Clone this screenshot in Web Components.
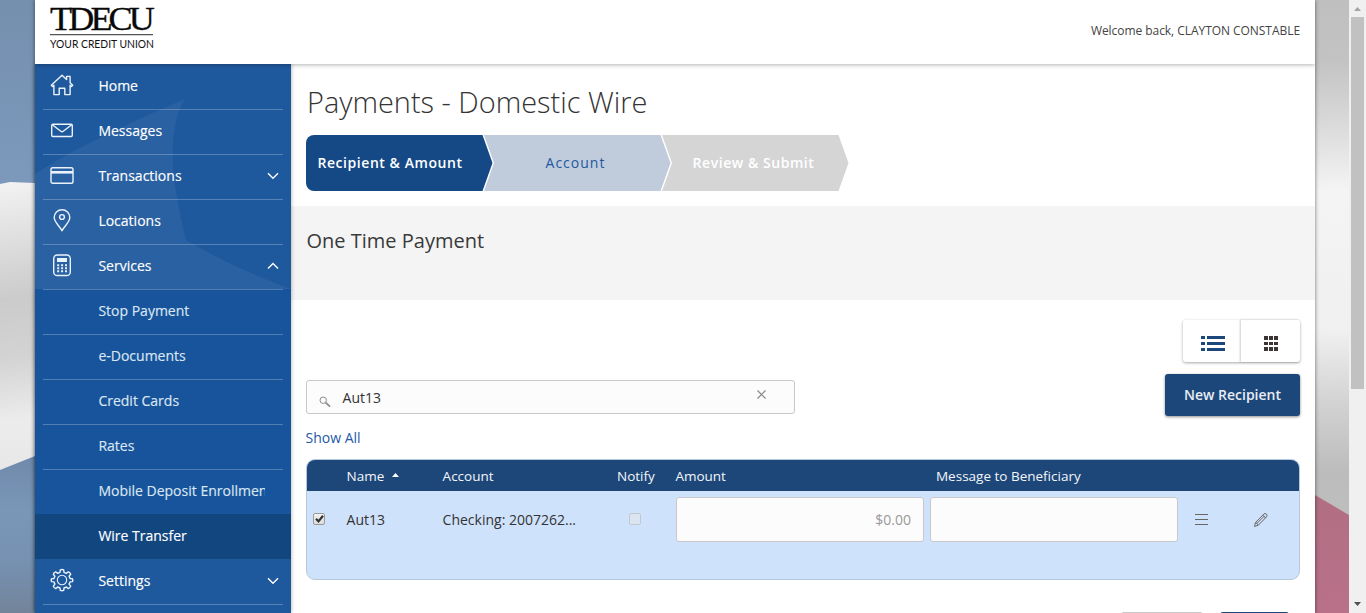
<!DOCTYPE html>
<html lang="en">
<head>
<meta charset="utf-8">
<title>Payments - Domestic Wire</title>
<style>
html,body{margin:0;height:613px;overflow:hidden}
body{font:14px/20px "Open Sans",sans-serif;color:#333;background:#fff}
</style>
</head>
<body>
<bank-app></bank-app>
<script>
const define=(name,html,init)=>customElements.define(name,class extends HTMLElement{
  constructor(){super();this.attachShadow({mode:'open'})}
  connectedCallback(){const t=document.createElement('template');t.innerHTML=html;this.shadowRoot.replaceChildren(t.content.cloneNode(true));if(init)init(this,this.shadowRoot)}
});

const ICONS={
home:'<path d="M1.3 12.3 12 2.2l4.6 4.3V3.4h3.5v6.4l2.6 2.5-1.2 1.2-1.4-1.2v9.3h-5.3v-6.4H9.2v6.4H3.9v-9.3l-1.4 1.2z"/>',
mail:'<rect x="1.7" y="6.2" width="20.6" height="12.3" rx="1.2"/><path d="m2.3 6.8 8.5 6.5q1.2 1 2.4 0l8.5-6.5"/>',
card:'<rect x="1" y="4.7" width="22" height="15.6" rx="1.8"/><path d="M1 9.3h22" stroke-width="2.6"/>',
pin:'<path d="M12 22.8C10.7 19.3 4.2 14.5 4.2 9.6a7.8 7.8 0 0 1 15.6 0C19.8 14.5 13.3 19.3 12 22.8z"/><circle cx="12" cy="9" r="2.4"/>',
calc:'<rect x="3.7" y="2" width="16.6" height="20.5" rx="3.6"/><path d="M7 7h10" stroke-width="4"/><path d="M7.2 12.3h9.8M7.2 15.3h9.8M7.2 18.3h9.8" stroke-width="2" stroke-dasharray="2 1.9"/>',
gear:'<circle cx="12" cy="12" r="4.7" stroke-width="1.1"/><path d="M10.3 1.9q1.7-.8 3.4 0l.3 2.5 2.3 1 2-1.6q1.8.6 2.4 2.4l-1.6 2 1 2.3 2.3.3q.8 1.3 0 2.8l-2.3.3-1 2.2 1.6 2q-.6 1.9-2.4 2.5l-2-1.6-2.3 1-.3 2.3q-1.7.8-3.4 0L10 20l-2.3-1-2 1.6q-1.8-.6-2.4-2.5l1.6-2-1-2.2-2.3-.3q-.8-1.5 0-2.8l2.3-.3 1-2.3-1.6-2q.6-1.8 2.4-2.4l2 1.6 2.3-1z"/>'
};

define('photo-edge',`<style>:host{display:block;flex:none;height:613px}svg{display:block;width:100%;height:100%}</style><div></div>`,(h,r)=>{
 r.querySelector('div').innerHTML=h.getAttribute('side')==='left'?
 `<svg viewBox="0 0 35 613" style="height:613px"><defs><linearGradient id="s" x2="0" y2="1"><stop stop-color="#758fae"/><stop offset="1" stop-color="#7c99bc"/></linearGradient><linearGradient id="g" gradientUnits="userSpaceOnUse" x1="0" y1="184" x2="40" y2="470"><stop stop-color="#f2f2f2"/><stop offset=".12" stop-color="#e6e6e6"/><stop offset=".4" stop-color="#cbcbcb"/><stop offset=".6" stop-color="#d3d3d3"/><stop offset=".82" stop-color="#ececec"/><stop offset="1" stop-color="#e7e7e7"/></linearGradient><linearGradient id="b" x2="0" y2="1"><stop stop-color="#7089ab"/><stop offset=".35" stop-color="#7a97b8"/><stop offset=".7" stop-color="#7690b0"/><stop offset="1" stop-color="#72849a"/></linearGradient></defs><path fill="url(#s)" d="M0 0h35v184H0z"/><path fill="url(#g)" d="M0 184 10 182 35 183V460L0 472z"/><path fill="url(#b)" d="M0 470 35 456V613H0z"/></svg>`:
 `<svg viewBox="0 0 34 613" style="height:613px"><defs><linearGradient id="g" gradientUnits="userSpaceOnUse" x1="0" y1="0" x2="12" y2="613"><stop stop-color="#bfbfbf"/><stop offset=".1" stop-color="#c3c3c3"/><stop offset=".2" stop-color="#d9d9d9"/><stop offset=".31" stop-color="#f4f4f4"/><stop offset=".54" stop-color="#f0f0f0"/><stop offset=".66" stop-color="#d2d2d2"/><stop offset=".77" stop-color="#bcbcbc"/><stop offset="1" stop-color="#c2c2c2"/></linearGradient><linearGradient id="p" x2="0" y2="1"><stop stop-color="#b16f83"/><stop offset="1" stop-color="#b9718a"/></linearGradient></defs><path fill="url(#g)" d="M0 0h34v613H0z"/><path fill="url(#p)" d="M0 495 34 515V613H0z"/></svg>`});

define('page-scrollbar',`<style>:host{display:flex;flex-direction:column;align-items:center;width:17px;height:613px;background:#f0f0f0;flex:none}svg{display:block}.thumb{width:13px;height:372px;background:#c1c1c1}.gap{flex:1}</style><svg width="17" height="17"><path d="M5 11h7L8.5 7z" fill="#a3a3a3"/></svg><div class="thumb"></div><div class="gap"></div><svg width="17" height="17"><path d="M5 6h7L8.5 10z" fill="#505050"/></svg>`);

define('brand-logo',`<style>:host{display:block}svg{display:block;overflow:visible}</style><svg width="112" height="50" viewBox="0 0 112 50"><text x="1" y="26.4" font-family="Liberation Serif,serif" font-size="33.5" letter-spacing="-3.6" textLength="101" lengthAdjust="spacingAndGlyphs" fill="#090909" stroke="#090909" stroke-width=".3">TDECU</text><path d="M1 30.6h103" stroke="#555" stroke-width="1.4"/><text x="1" y="43.5" font-family="Lato,sans-serif" font-size="11.9" textLength="104" lengthAdjust="spacingAndGlyphs" fill="#111">YOUR CREDIT UNION</text></svg>`);

define('app-header',`<style>:host{display:flex;box-sizing:border-box;height:64px;padding:4px 15px 0 14px;justify-content:space-between;background:#fff;box-shadow:0 1px 4px rgba(0,0,0,.3);position:relative;z-index:2;clip-path:inset(0 0 -6px 0)}span{font-size:12px;letter-spacing:-.05px;line-height:18px;margin-top:18px;color:#444}</style><brand-logo></brand-logo><span>Welcome back, CLAYTON CONSTABLE</span>`);

define('nav-item',`<style>:host{display:block;height:45px;box-sizing:border-box;padding:0 8px;color:#fff}.r{display:flex;align-items:center;height:45px;box-sizing:border-box;border-top:1px solid rgba(255,255,255,.25);padding-bottom:3px}:host([plain]) .r{border-color:transparent}:host([active]){background:#12467f}:host([sub]:not([active])){color:#dce6f2}.i{width:24px;height:24px;margin:-1px 24.4px 0 7px;flex:none}.i svg{display:block;fill:none;stroke:#eaf2fb;stroke-width:1.4;stroke-linejoin:round}.t{width:167px;flex:none;overflow:hidden;white-space:nowrap;-webkit-text-stroke:.15px currentColor}.c{flex:none;width:12px;height:8px;margin:1px 0 0 2px}.c svg{display:block;fill:none;stroke:#fff;stroke-width:1.4}</style><div class="r"><div class="i"></div><div class="t"><slot></slot></div><div class="c"></div></div>`,(h,r)=>{
 const i=h.getAttribute('icon'),c=h.getAttribute('chevron');
 if(i)r.querySelector('.i').innerHTML='<svg width="24" height="24" viewBox="0 0 24 24">'+ICONS[i]+'</svg>';
 if(c)r.querySelector('.c').innerHTML='<svg width="12" height="8" viewBox="0 0 12 8"><path d="'+(c==='up'?'M1 6.5l5-5 5 5':'M1 1.2l5 5 5-5')+'"/></svg>';
});

define('side-nav',`<style>:host{display:block;width:256px;height:549px;overflow:hidden;flex:none;background:#1f599d;background-image:url("data:image/svg+xml,%3Csvg xmlns='http://www.w3.org/2000/svg' width='256' height='549'%3E%3Cpath d='M0 110Q45 80 150 35Q125 75 151 176Q200 205 256 225V470H0z' fill='%23fff' fill-opacity='.05'/%3E%3C/svg%3E");box-shadow:0 0 4px rgba(0,0,0,.35)}.sub{background:#17549b}</style>
<nav><nav-item plain icon="home">Home</nav-item><nav-item icon="mail">Messages</nav-item><nav-item icon="card" chevron="down">Transactions</nav-item><nav-item icon="pin">Locations</nav-item><nav-item icon="calc" chevron="up">Services</nav-item>
<div class="sub"><nav-item sub>Stop Payment</nav-item><nav-item sub>e-Documents</nav-item><nav-item sub>Credit Cards</nav-item><nav-item sub>Rates</nav-item><nav-item sub>Mobile Deposit Enrollment</nav-item><nav-item sub active plain>Wire Transfer</nav-item></div>
<nav-item plain icon="gear" chevron="down">Settings</nav-item><nav-item></nav-item></nav>`);

define('wizard-step',`<style>:host{display:flex;box-sizing:border-box;width:188px;height:56px;align-items:center;justify-content:center;padding-right:20px;letter-spacing:1px;background:var(--bg);color:var(--fg);clip-path:polygon(0 0,176.5px 0,186.5px 50%,176.5px 100%,0 100%)}:host([first]){border-radius:8px 0 0 8px}:host(:not([first])){margin-left:-10px;padding-left:12px;padding-right:17px;clip-path:polygon(0 0,176.5px 0,186.5px 50%,176.5px 100%,0 100%,10px 50%)}:host([strong]){font-weight:600;letter-spacing:.55px}</style><slot></slot>`);
define('wizard-steps',`<style>:host{display:flex;margin:13px 0 0 15px;width:560px}.a{--bg:#144986;--fg:#fff}.b{--bg:#c0ccdb;--fg:#2258a0}.c{--bg:#d5d5d5;--fg:#fff}</style><wizard-step first strong class="a">Recipient &amp; Amount</wizard-step><wizard-step class="b">Account</wizard-step><wizard-step strong class="c">Review &amp; Submit</wizard-step>`);

define('view-toggle',`<style>:host{display:flex;width:117px;height:42px;margin:20px 0 0 auto;border-radius:3px;box-shadow:0 1px 3px rgba(0,0,0,.35);background:#fff}div{flex:1;display:flex;align-items:center;justify-content:center;padding:3px 0 0 2px}div+div{flex:none;padding-left:0;width:59px;box-shadow:-1px 0 2px rgba(0,0,0,.2)}svg{display:block}</style><div><svg width="24" height="16" fill="#1c477a"><path d="M0 1h4v3H0zm6 0h18v3H6zM0 7h4v3H0zm6 0h18v3H6zM0 13h4v3H0zm6 0h18v3H6z"/></svg></div><div><svg width="16" height="16" fill="#3d3535"><path d="M1 1h4v4H1zm5 0h4v4H6zm5 0h4v4h-4zM1 7h4v3H1zm5 0h4v3H6zm5 0h4v3h-4zM1 12h4v4H1zm5 0h4v4H6zm5 0h4v4h-4z"/></svg></div>`);

define('search-box',`<style>:host{display:flex;box-sizing:border-box;width:489px;height:34px;border:1px solid #c8c8c8;border-radius:3px;background:#fcfcfc;align-items:center;padding:0 28px 0 12px}.l{margin-top:10px}span{margin-left:11.6px;flex:1;color:#333;padding-top:2px}.x{margin-bottom:5px}svg{display:block;flex:none}</style><svg class="l" width="12" height="12" fill="none" stroke="#8b8b8b"><circle cx="4.2" cy="4.2" r="3.2"/><path d="M6.7 6.7l4.3 4" stroke-width="1.8"/></svg><span>Aut13</span><svg class="x" width="9" height="9" stroke="#888" stroke-width="1.2"><path d="M.5.5l8 8m0-8l-8 8"/></svg>`);

define('primary-button',`<style>:host{display:flex;width:135px;height:42px;align-items:center;justify-content:center;background:#1c477a;color:#e8edf3;border-radius:3px;box-shadow:0 1px 3px rgba(0,0,0,.45);font-weight:600}</style><slot></slot>`);

define('check-box',`<style>:host{display:block;box-sizing:border-box;width:12px;height:12px;border:1px solid #9a9a9a;border-radius:2px;background:linear-gradient(#f2f2f2,#ddd)}:host([disabled]){border-color:#c1c8d0;background:#dae5f0}svg{display:none;margin:-1px 0 0 0}:host([checked]) svg{display:block}</style><svg width="11" height="11"><path d="M2 5.7l2.5 2.7L9 2.7" stroke="#333" stroke-width="2.2" fill="none"/></svg>`);

define('recipient-table',`<style>:host{display:block;box-sizing:border-box;height:121px;margin:11px 0 0;border:1px solid #b4c8de;border-radius:9px;overflow:hidden;background:#cfe2fc}.h,.r{display:grid;grid-template-columns:39.6px 96px 174.4px 58.4px 260.6px 363px;align-items:center}.h{height:31px;background:#1d4779;color:#f3f6fa;font-size:13.5px}.h span{padding-top:1px}.r{height:57px;grid-template-columns:6px 33.6px 96px 180.4px 47px 6px 248px 6px 248px 16px 16px 43px 16px}.r check-box{margin-top:-1px}.f{height:45px;box-sizing:border-box;border:1px solid #c8c8c8;border-radius:3px;background:#fcfcfc;text-align:right;padding:12px 12px;color:#999}svg{display:block}.s{display:inline-block;vertical-align:4px;margin-left:8px}</style>
<div class="h"><i></i><span>Name<svg class="s" width="7" height="4"><path d="M0 4h7L3.5 0z" fill="#fff"/></svg></span><span>Account</span><span>Notify</span><span>Amount</span><span>Message to Beneficiary</span></div>
<div class="r"><i></i><check-box checked></check-box><span>Aut13</span><span>Checking: 2007262...</span><check-box disabled style="margin-left:6px"></check-box><i></i><div class="f">$0.00</div><i></i><div class="f"></div><i></i><svg width="16" height="12" stroke="#666"><path d="M1 .5h13M1 5.5h13M1 10.5h13"/></svg><i></i><svg width="16" height="16" fill="none" stroke="#666"><path d="M1.5 14.5l1-4 8-8.2q1.5-1.5 2.9-.2t.1 2.8l-8.1 8.2zM2.5 10.5q2 .5 2.6 2.6M9.5 3.3q2 .5 2.9 2.7M4.2 11.2l6.9-7"/></svg></div>`);

define('payment-page',`<style>:host{display:block;width:1024px;height:549px;overflow:hidden;background:#fff}h1{font-weight:300;font-size:28.9px;line-height:40px;margin:18px 0 0 16px;color:#333;padding:0}.band{height:94px;box-sizing:border-box;background:#f4f4f4;margin-top:15px;padding:20px 15.5px}h2{font-weight:400;font-size:20px;line-height:30px;margin:0;color:#3a3a3a}.body{padding:0 15px}.tools{display:flex;justify-content:space-between;align-items:center;margin-top:12px;height:42px}search-box{margin-top:4px}a{display:block;margin:12px 0 0 -.5px;color:#2459a5;width:max-content}.foot{display:flex;justify-content:flex-end;gap:17px;margin:32px 11px 0}.foot i{width:82px;height:30px;border-radius:3px;background:#c8c8c8}.foot i+i{width:69px;background:#1c477a}</style>
<h1>Payments - Domestic Wire</h1><wizard-steps></wizard-steps><div class="band"><h2>One Time Payment</h2></div>
<div class="body"><view-toggle></view-toggle><div class="tools"><search-box></search-box><primary-button>New Recipient</primary-button></div><a>Show All</a><recipient-table></recipient-table><div class="foot"><i></i><i></i></div></div>`);

define('bank-app',`<style>:host{display:flex;width:1366px;height:613px;overflow:hidden}main{width:1280px;height:613px;flex:none;position:relative;box-shadow:0 0 4px rgba(0,0,0,.55)}.cols{display:flex}photo-edge{width:35px}photo-edge+main+photo-edge{width:34px}page-scrollbar{position:relative}side-nav{position:relative;z-index:1}</style><photo-edge side="left"></photo-edge><main><app-header></app-header><div class="cols"><side-nav></side-nav><payment-page></payment-page></div></main><photo-edge side="right"></photo-edge><page-scrollbar></page-scrollbar>`);
</script>
</body>
</html>
